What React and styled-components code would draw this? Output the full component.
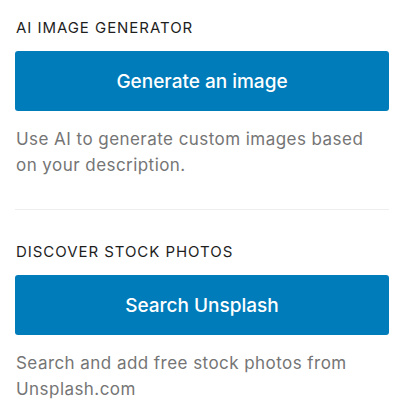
import styled, { createGlobalStyle } from "styled-components"

const GlobalStyle = createGlobalStyle`
    body {
        margin: 0;
        background: #ffffff;
        font-family: Inter, "Liberation Sans", sans-serif;
    }
`

export default function App() {
    return (
        <>
            <GlobalStyle />
            <Panel>
                <Section>
                    <Heading>AI Image Generator</Heading>
                    <ActionButton>Generate an image</ActionButton>
                    <Help>Use AI to generate custom images based on your description.</Help>
                </Section>
                <Divider />
                <Section>
                    <Heading>Discover Stock Photos</Heading>
                    <ActionButton>Search Unsplash</ActionButton>
                    <Help>Search and add free stock photos from Unsplash.com</Help>
                </Section>
            </Panel>
        </>
    )
}

const Panel = styled.div`
    width: 400px;
    box-sizing: border-box;
    padding: 19px 11px 0 15px;
    display: flex;
    flex-direction: column;
`
const Section = styled.div`
    display: flex;
    flex-direction: column;
`
const Heading = styled.h2`
    margin: 0 0 14px;
    font-size: 15px;
    line-height: 18px;
    font-weight: 400;
    text-transform: uppercase;
    letter-spacing: 0.95px;
    color: #1e1e1e;
    padding-left: 1px;
`
const ActionButton = styled.button`
    height: 60px;
    width: 100%;
    border: none;
    border-radius: 3px;
    background: #007cba;
    color: #ffffff;
    font-family: Inter, "Liberation Sans", sans-serif;
    font-size: 19px;
    font-weight: 500;
    cursor: pointer;
`
const Help = styled.p`
    margin: 15px 0 0;
    max-width: 360px;
    font-size: 17px;
    line-height: 26px;
    letter-spacing: 0.45px;
    color: #757575;
    padding-left: 1px;
`
const Divider = styled.hr`
    margin: 31px 0 33px;
    border: none;
    border-top: 1px solid #eeeeee;
    height: 0;
`
